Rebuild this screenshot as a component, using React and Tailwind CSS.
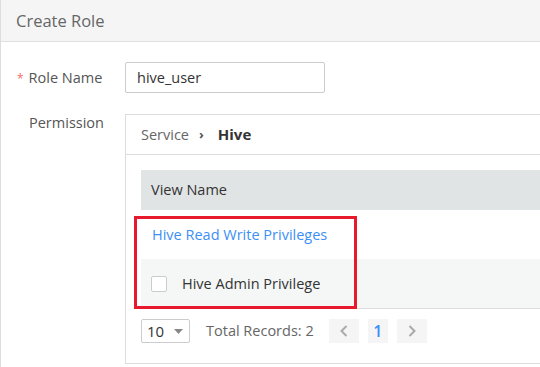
export default function App() {
    return (
        <div
            className="w-[540px] h-[367px] overflow-hidden bg-white border-l border-[#dddddd] text-[14.5px] text-[#555]"
            style={{ fontFamily: '"Open Sans", "Noto Sans", sans-serif' }}
        >
            <div className="h-[42px] bg-[#f5f5f5] border-b border-[#e0e0e0] pl-[15px] text-[16.5px] leading-[41px] text-[#666]">
                Create Role
            </div>

            <div className="pt-[20px]">
                <div className="flex items-center h-[31px]">
                    <div className="w-[124px] pl-[16px] flex items-center">
                        <span className="text-[#f56c6c] text-[12px] mr-[5px] mt-[2px]">*</span>
                        <span>Role Name</span>
                    </div>
                    <div className="w-[200px] h-[31px] border border-[#cccccc] rounded-[2px] px-[11px] flex items-center text-[#333]">
                        hive_user
                    </div>
                </div>

                <div className="flex mt-[21px]">
                    <div className="w-[124px] pl-[28px] mt-[-2px]">Permission</div>
                    <div className="flex-1 h-[250px] border border-r-0 border-[#dddddd]">
                        <div className="h-[40px] border-b border-[#dddddd] px-[15px] flex items-center text-[#666]">
                            <span>Service</span>
                            <span className="ml-[10px] mr-[14px] text-[13px] font-bold text-[#555]">›</span>
                            <span className="font-bold text-[#333] text-[15px]">Hive</span>
                        </div>

                        <div className="pl-[15px] pt-[15px]">
                            <div className="relative">
                                <div className="h-[40px] bg-[#e1e4e5] pl-[10px] flex items-center text-[#333]">
                                    View Name
                                </div>
                                <div className="h-[49px] pl-[11px] flex items-center text-[#3d8ff5]">
                                    Hive Read Write Privileges
                                </div>
                                <div className="h-[50px] bg-[#f5f7f7] border-b border-[#dddddd] pl-[10px] flex items-center gap-[15px] text-[#333]">
                                    <span className="w-[16px] h-[16px] bg-white border border-[#cccccc] rounded-[2px]" />
                                    <span>Hive Admin Privilege</span>
                                </div>
                                <div className="absolute left-[-7px] top-[46px] w-[223px] h-[93px] border-[3px] border-[#e8192c]" />
                            </div>

                            <div className="mt-[10px] flex items-center h-[24px]">
                                <div className="w-[49px] h-[24px] border border-[#cccccc] rounded-[2px] pl-[5px] pr-[6px] flex items-center justify-between text-[#333] text-[15px]">
                                    <span>10</span>
                                    <svg width="9" height="5" viewBox="0 0 9 5">
                                        <path d="M0 0 L9 0 L4.5 5 Z" fill="#888" />
                                    </svg>
                                </div>
                                <span className="ml-[16px] text-[#666]">Total Records: 2</span>
                                <div className="ml-[15px] w-[30px] h-[24px] bg-[#f5f5f5] flex items-center justify-center">
                                    <svg width="8" height="12" viewBox="0 0 8 12">
                                        <polyline points="6.5,1 1.5,6 6.5,11" fill="none" stroke="#aaaaaa" strokeWidth="2" />
                                    </svg>
                                </div>
                                <div className="ml-[9px] w-[20px] h-[24px] bg-[#f5f5f5] flex items-center justify-center text-[#3d8ff5] font-semibold text-[16px]">
                                    1
                                </div>
                                <div className="ml-[9px] w-[30px] h-[24px] bg-[#f5f5f5] flex items-center justify-center">
                                    <svg width="8" height="12" viewBox="0 0 8 12">
                                        <polyline points="1.5,1 6.5,6 1.5,11" fill="none" stroke="#aaaaaa" strokeWidth="2" />
                                    </svg>
                                </div>
                            </div>
                        </div>
                    </div>
                </div>
            </div>
        </div>
    );
}
